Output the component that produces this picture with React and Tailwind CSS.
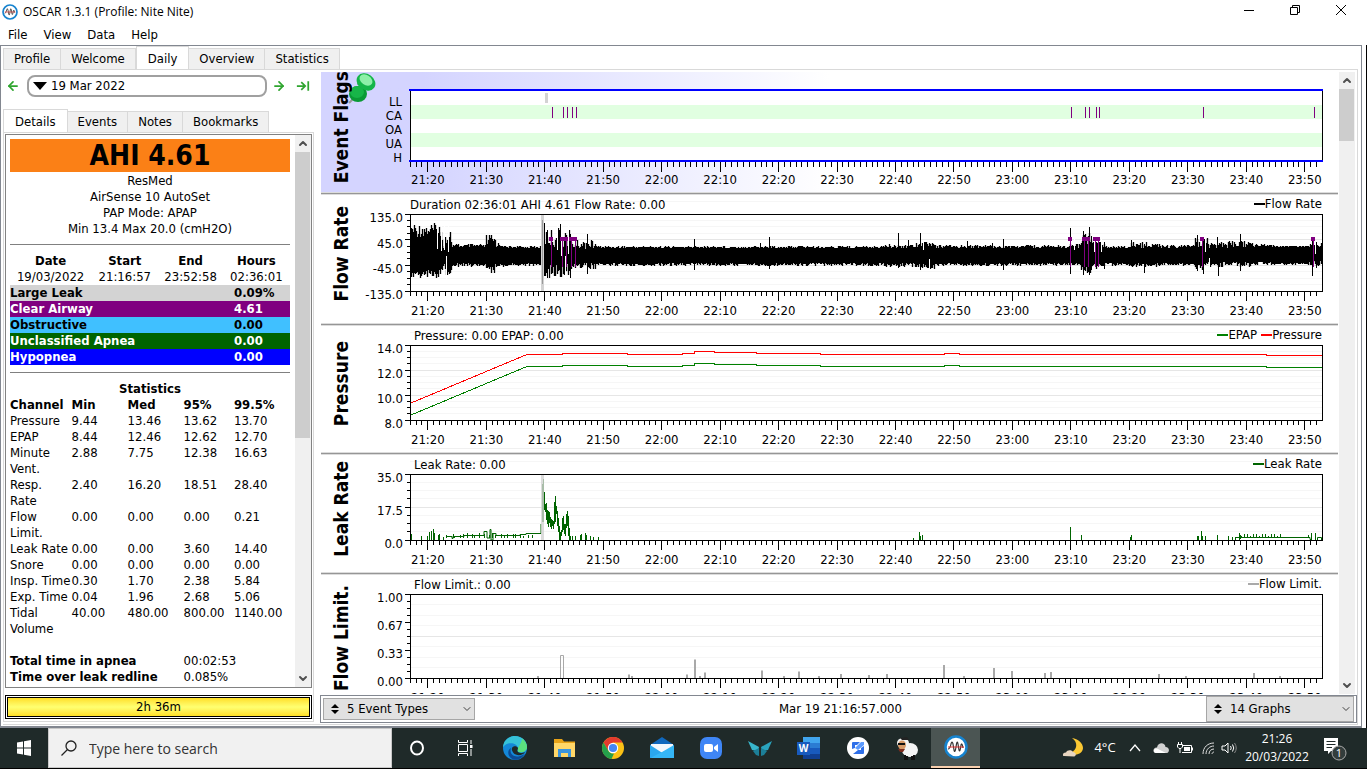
import { ArrowLeft, ArrowRight, ChevronDown, ChevronUp } from "lucide-react";

const mainTabs = ["Profile", "Welcome", "Daily", "Overview", "Statistics"];
const detailTabs = ["Details", "Events", "Notes", "Bookmarks"];

const eventTotals = [
  { name: "Large Leak", value: "0.09%", className: "bg-[#d3d3d3] text-black" },
  { name: "Clear Airway", value: "4.61", className: "bg-[#800080] text-white" },
  { name: "Obstructive", value: "0.00", className: "bg-[#40c0ff] text-black" },
  { name: "Unclassified Apnea", value: "0.00", className: "bg-[#006400] text-white" },
  { name: "Hypopnea", value: "0.00", className: "bg-[#0000ff] text-white" },
];

const statistics = [
  ["Pressure", "9.44", "13.46", "13.62", "13.70"],
  ["EPAP", "8.44", "12.46", "12.62", "12.70"],
  ["Minute\nVent.", "2.88", "7.75", "12.38", "16.63"],
  ["Resp.\nRate", "2.40", "16.20", "18.51", "28.40"],
  ["Flow\nLimit.", "0.00", "0.00", "0.00", "0.21"],
  ["Leak Rate", "0.00", "0.00", "3.60", "14.40"],
  ["Snore", "0.00", "0.00", "0.00", "0.00"],
  ["Insp. Time", "0.30", "1.70", "2.38", "5.84"],
  ["Exp. Time", "0.04", "1.96", "2.68", "5.06"],
  ["Tidal\nVolume", "40.00", "480.00", "800.00", "1140.00"],
];

// The session starts at 21:16:57 and lasts 156 minutes. Traces are drawn in a
// 912 unit wide space that stretches with the plot.
const SESSION_MINUTES = 156;
const FIRST_MINUTE = 17;
const TRACE_WIDTH = 912;

const minuteTicks = Array.from({ length: 156 }, (_, i) => {
  const minute = FIRST_MINUTE + i;
  return {
    x: `${((i + 0.05) / SESSION_MINUTES) * 100}%`,
    major: minute % 10 === 0,
    label: `${21 + Math.floor(minute / 60)}:${String(minute % 60).padStart(2, "0")}`,
  };
});

const clearAirways = [142, 153, 157, 162, 166, 661, 675, 679, 686, 689, 793, 904];

function noise(n) {
  const value = Math.sin(n * 12.9898) * 43758.5453;
  return value - Math.floor(value);
}

// [end x, top, top jitter, bottom, bottom jitter]
const flowSegments = [
  [30, 9, 14, 55, 10],
  [42, 14, 20, 50, 11],
  [76, 30, 4, 49, 4],
  [86, 20, 14, 50, 9],
  [94, 28, 5, 50, 4],
  [132, 32, 2, 49, 3],
  [161, 14, 20, 50, 14],
  [186, 26, 9, 49, 6],
  [470, 32, 2, 49, 3],
  [505, 30, 4, 49, 4],
  [525, 27, 6, 50, 5],
  [660, 31, 3, 49, 3],
  [671, 29, 5, 49, 3],
  [681, 16, 14, 52, 9],
  [695, 25, 8, 49, 6],
  [720, 32, 2, 49, 3],
  [750, 28, 6, 49, 4],
  [785, 31, 3, 49, 3],
  [798, 24, 9, 49, 7],
  [843, 27, 7, 48, 5],
  [864, 30, 3, 48, 3],
  [899, 32, 1, 49, 2],
  [912, 29, 5, 47, 5],
];

const flowSpikes = [
  [134, 9, 60], [137, 16, 64], [150, 10, 56], [160, 20, 64], [177, 20, 60],
  [284, 25, 56], [350, 29, 50], [359, 23, 55], [488, 19, 54], [498, 26, 50],
  [510, 19, 56], [557, 27, 50], [582, 29, 50], [593, 25, 56], [660, 14, 60],
  [673, 17, 61], [679, 13, 61], [681, 22, 56], [694, 28, 55], [721, 26, 51],
  [734, 30, 59], [787, 21, 57], [793, 25, 60], [807, 23, 50], [808, 31, 62],
  [830, 20, 57], [902, 26, 62], [906, 28, 54],
];

const flowPath = Array.from({ length: TRACE_WIDTH }, (_, x) => {
  const [, top, topJitter, bottom, bottomJitter] = flowSegments.find(([end]) => x < end);
  const up = top + Math.round(noise(x + 3) * topJitter);
  const down = bottom + Math.round(noise(x * 3 + 11) * bottomJitter);
  return `M${x + 0.5} ${up}V${down}`;
}).join("");

const flowSpikePath = flowSpikes.map(([x, top, bottom]) => `M${x + 0.5} ${top}V${bottom}`).join("");

// [x, from, to] slits where single breaths stay visible
const flowGaps = [
  [27, 10, 35], [31, 10, 37], [34, 10, 36], [36, 42, 66], [38, 10, 38], [133, 10, 50],
  [147, 10, 36], [151, 10, 42], [155, 42, 66], [158, 10, 40], [513, 26, 36],
  [519, 45, 56], [664, 25, 36], [684, 24, 38], [691, 24, 38], [795, 24, 38],
  [799, 44, 56], [905, 26, 40],
];

const leakNoise = Array.from({ length: 22 }, (_, i) => {
  const x = 36 + Math.round(i * 4 + noise(i) * 3);
  return `M${x + 0.5} 64V${62 - Math.round(noise(i + 5) * 3)}`;
}).join("");

const leakTail = Array.from({ length: 14 }, (_, i) => `M${831.5 + i * 3} 63V${i % 3 === 0 ? 62 : 60}`).join("");

const graphs = [
  {
    title: "Flow Rate",
    height: 128,
    top: 19,
    plot: 77,
    summary: "Duration 02:36:01 AHI 4.61 Flow Rate: 0.00",
    summaryX: 0,
    scale: ["135.0", "45.0", "-45.0", "-135.0"],
    majors: 3,
    legend: [{ name: "Flow Rate", className: "bg-black" }],
    Trace: FlowRateTrace,
  },
  {
    title: "Pressure",
    height: 126,
    top: 19,
    plot: 75,
    summary: "Pressure: 0.00 EPAP: 0.00",
    summaryX: 4,
    scale: ["14.0", "12.0", "10.0", "8.0"],
    majors: 3,
    legend: [
      { name: "EPAP", className: "bg-[#008000]" },
      { name: "Pressure", className: "bg-[#ff0000]" },
    ],
    Trace: PressureTrace,
  },
  {
    title: "Leak Rate",
    height: 117,
    top: 19,
    plot: 66,
    summary: "Leak Rate: 0.00",
    summaryX: 4,
    scale: ["35.0", "17.5", "0.0"],
    majors: 2,
    legend: [{ name: "Leak Rate", className: "bg-[#006400]" }],
    Trace: LeakRateTrace,
  },
  {
    title: "Flow Limit.",
    height: 136,
    top: 19,
    plot: 84,
    summary: "Flow Limit.: 0.00",
    summaryX: 4,
    scale: ["1.00", "0.67", "0.33", "0.00"],
    majors: 2,
    legend: [{ name: "Flow Limit.", className: "bg-[#a9a9a9]" }],
    Trace: FlowLimitTrace,
  },
];

function FlowRateTrace() {
  return (
    <>
      <path d={flowPath} stroke="#000" strokeWidth="1.3" />
      <path d={flowSpikePath} stroke="#000" />
      <path d={flowGaps.map(([x, from, to]) => `M${x + 0.5} ${from}V${to}`).join("")} stroke="#fff" />
      <rect x="131" y="0" width="3" height="77" fill="#d3d3d3" />
      <path d="M132.500 6V70" stroke="#999" />
      {clearAirways.map((x) => (
        <g key={x}>
          <rect x={x - 3} y="23" width="4" height="4" fill="#800080" />
          <path d={`M${x - 0.5} 26V53`} stroke="#800080" />
        </g>
      ))}
    </>
  );
}

function PressureTrace() {
  return (
    <g shapeRendering="crispEdges">
      <path
        d="M1 58L118 9H152V8H217V9H272V8H284V6H304V7H346V8H410V9H534V8H549V9H856V10H912"
        stroke="#ff0000"
      />
      <path
        d="M1 70L118 21H152V20H217V21H272V20H284V18H304V19H346V20H410V21H534V20H549V21H856V22H912"
        stroke="#008000"
      />
    </g>
  );
}

function LeakRateTrace() {
  return (
    <>
      <g stroke="#006400" fill="none">
        <path d="M0.500 66V59M1.500 66V60M11.500 66V62M17.500 66V62M19.500 66V58M21.500 66V57M23.500 66V55M24.500 66V59M28.500 66V61M29.500 66V60M33.500 66V63" />
        <path d="M36 62.500H42V64.500H43V62.500H54V61.500H74V57.500H77V64H80V55.500H81V66H83V59.500H86V61.500H110V60.500H116V59.500H131V50" />
        <path d={leakNoise} />
        <path d="M132.500 48V10M133.500 48V5M134.500 36V18M135.500 38V30M136.500 46V29M137.500 50V36M138.500 53V37M139.500 49V38M140.500 53V43M141.500 55V45M142.500 52V46M143.500 55V47M144.500 50V28M145.500 48V22M146.500 40V32M147.500 52V37M148.500 58V44M149.500 66V52M150.500 66V58M151.500 62V56M152.500 58V44M153.500 56V42M154.500 60V50M155.500 62V50M156.500 54V40M157.500 52V37M158.500 62V42M159.500 66V54M160.500 66V62" />
        <path d="M162.500 66V62M165.500 66V62M170.500 66V61M171.500 66V60M175.500 66V59M176.500 66V61M180.500 66V62M183.500 66V63M188.500 66V63" />
        <path d="M503.500 66V64M509.500 66V58M510.500 66V62M512.500 66V61M660.500 66V53M671.500 66V61M720.500 66V63M721.500 66V61M787.500 66V62M788.500 66V62M791.500 66V57M792.500 66V62M795.500 66V62M807.500 66V61M818.500 66V62M822.500 66V63M825.500 66V63" />
        <path d="M826 63.500H900V65.500H902M907.500 66V63.500H911.500V66" />
        <path d="M829.500 66V59M830.500 65V61M898.500 64V61M901.500 66V59M905.500 66V59" />
        <path d={leakTail} />
      </g>
      <rect x="131" y="0" width="3" height="66" fill="#d3d3d3" fillOpacity="0.8" />
    </>
  );
}

function FlowLimitTrace() {
  return (
    <>
      <path d="M150.500 84V61.500H153.500V84" stroke="#a9a9a9" />
      <path
        d="M128 84V82M219 84V80.500M222 84V82M277 84V80.500M285 84V65.500M290 84V82M295 84V78.500M352 84V76.500M374 84V82M389 84V77.500M409 84V82M431 84V80M459 84V81M477 84V80M534 84V71M554 84V82M584 84V74M602 84V77M635 84V79M641 84V78M749 84V80M776 84V82M844 84V79M870 84V82"
        stroke="#a9a9a9"
        strokeWidth="2"
      />
    </>
  );
}

function TimeAxis({ y, labelGap = 24 }) {
  return (
    <g>
      {minuteTicks.map((tick) => (
        <line
          key={tick.label}
          x1={tick.x}
          x2={tick.x}
          y1={y}
          y2={y + (tick.major ? 10 : 5)}
          stroke="#000"
          shapeRendering="crispEdges"
        />
      ))}
      {minuteTicks
        .filter((tick) => tick.major)
        .map((tick) => (
          <text key={tick.label} x={tick.x} y={y + labelGap} textAnchor="middle">
            {tick.label}
          </text>
        ))}
    </g>
  );
}

function GraphTitle({ children }) {
  return (
    <div className="flex w-10 shrink-0 items-center justify-center pb-2.5">
      <h2 className="rotate-180 text-[19px] leading-5 font-bold whitespace-nowrap [writing-mode:vertical-rl]">
        {children}
      </h2>
    </div>
  );
}

function GraphDivider() {
  return <div className="h-[3px] shrink-0 border-y border-[#dcdcdc] bg-[#969696]" />;
}

function EventFlags() {
  return (
    <section className="relative flex h-[120px] shrink-0 bg-linear-to-r from-[#d4d4ff] from-10% to-white to-50% pr-4">
      <svg className="absolute top-0 left-6 h-8 w-8" viewBox="0 0 32 32" aria-hidden="true">
        <path d="M8 27L4 31" stroke="#999" strokeWidth="2" />
        <ellipse cx="13" cy="22" rx="9" ry="8" fill="#0a9a35" />
        <ellipse cx="12" cy="20" rx="7" ry="6" fill="#17b548" />
        <path d="M12 12L20 19L24 12L17 6Z" fill="#0c8f30" />
        <ellipse cx="21" cy="10" rx="10" ry="8" transform="rotate(35 21 10)" fill="#14b548" />
        <ellipse cx="21" cy="8" rx="7" ry="5" transform="rotate(35 21 8)" fill="#8df0a8" />
      </svg>
      <GraphTitle>Event Flags</GraphTitle>
      <svg className="ml-[49px] h-full min-w-0 flex-1 overflow-visible text-[13px]">
        <rect x="0" y="18" width="100%" height="71" fill="#fff" />
        <rect x="1" y="33" width="100%" height="14" fill="#e1ffe1" />
        <rect x="1" y="61" width="100%" height="14" fill="#e1ffe1" />
        {["LL", "CA", "OA", "UA", "H"].map((name, i) => (
          <text key={name} x="-8" y={34 + i * 14} textAnchor="end">
            {name}
          </text>
        ))}
        <svg width="100%" height="120" viewBox="0 0 912 120" preserveAspectRatio="none">
          <rect x="135" y="21" width="3" height="10" fill="#d3d3d3" />
          {clearAirways.map((x) => (
            <path key={x} d={`M${x + 0.5} 35V46`} stroke="#800080" />
          ))}
        </svg>
        <g shapeRendering="crispEdges">
          <line x1="0" x2="0" y1="18" y2="90" stroke="#000" />
          <line x1="100%" x2="100%" y1="18" y2="90" stroke="#000" />
          <line x1="0" x2="100%" y1="18" y2="18" stroke="#0000ff" strokeWidth="2" strokeLinecap="square" />
          <line x1="0" x2="100%" y1="89" y2="89" stroke="#0000ff" strokeWidth="2" strokeLinecap="square" />
        </g>
        <TimeAxis y={90} labelGap={22} />
      </svg>
    </section>
  );
}

function Graph({ graph }) {
  const { title, height, top, plot, summary, summaryX, scale, majors, legend, Trace } = graph;
  const tickCount = (scale.length - 1) * 4;
  const gridCount = majors * 4;

  return (
    <section className="flex shrink-0 pr-4" style={{ height }}>
      <GraphTitle>{title}</GraphTitle>
      <div className="relative ml-[49px] min-w-0 flex-1">
        <svg className="h-full w-full overflow-visible text-[13px]">
          <g shapeRendering="crispEdges">
            {Array.from({ length: gridCount + 1 }, (_, i) => (
              <line
                key={i}
                x1="0"
                x2="100%"
                y1={top + (plot * i) / gridCount}
                y2={top + (plot * i) / gridCount}
                stroke={i % 4 === 0 ? "#e6e6e6" : "#f6f6f6"}
              />
            ))}
            <line x1="0" x2="100%" y1="6" y2="6" stroke="#f6f6f6" />
            <line x1="0" x2="100%" y1={height - 4} y2={height - 4} stroke="#f0f0f0" />
          </g>
          <svg y={top} width="100%" height={plot} viewBox={`0 0 912 ${plot}`} preserveAspectRatio="none" fill="none">
            <Trace />
          </svg>
          <g shapeRendering="crispEdges">
            <rect x="0" y={top} width="100%" height={plot} fill="none" stroke="#000" />
            {Array.from({ length: tickCount + 1 }, (_, i) => (
              <line
                key={i}
                x1={i % 4 === 0 ? -5 : -3}
                x2="0"
                y1={top + (plot * i) / tickCount}
                y2={top + (plot * i) / tickCount}
                stroke="#000"
              />
            ))}
          </g>
          {scale.map((label, i) => (
            <text key={label} x="-7" y={top + 8 + (plot * i) / (scale.length - 1)} textAnchor="end">
              {label}
            </text>
          ))}
          <text x={summaryX} y={top - 5}>
            {summary}
          </text>
          <TimeAxis y={top + plot} />
        </svg>
        <ul className="absolute top-px right-0 flex gap-1 text-[13px] leading-4">
          {legend.map((item) => (
            <li key={item.name} className="flex items-center">
              <span className={`h-0.5 w-[11px] ${item.className}`} />
              {item.name}
            </li>
          ))}
        </ul>
      </div>
    </section>
  );
}

function ScrollBar({ thumbClass }) {
  return (
    <div className="flex w-4 shrink-0 flex-col items-center bg-[#f0f0f0] text-[#505050]">
      <ChevronUp className="h-[17px] w-3 shrink-0" strokeWidth={4} />
      <div className="w-full min-h-0 flex-1 pr-px">
        <div className={`bg-[#cdcdcd] ${thumbClass}`} />
      </div>
      <ChevronDown className="h-[17px] w-3 shrink-0" strokeWidth={4} />
    </div>
  );
}

function OscarMark() {
  return (
    <>
      <circle cx="12" cy="12" r="10.500" fill="#fff" stroke="#1683cf" strokeWidth="2.500" />
      <path
        d="M4 14Q6 14 7 9Q8 5 9 9L10 15Q11 19 12 12Q13 4 14 9L15 15Q16 18 17 10Q18 7 19 13"
        stroke="#333"
        strokeWidth="1.200"
      />
      <path d="M4 12H20" stroke="#e03030" />
    </>
  );
}

function TitleBar() {
  return (
    <header className="flex h-6 shrink-0 items-center bg-white pl-0.5">
      <svg className="h-4 w-4" viewBox="0 0 24 24" fill="none" aria-hidden="true">
        <OscarMark />
      </svg>
      <h1 className="ml-[5px] font-['Open_Sans',sans-serif] text-[12px]">OSCAR 1.3.1 (Profile: Nite Nite)</h1>
      <div className="mr-[3px] ml-auto flex pb-1">
        <button className="flex h-5 w-[46px] items-center justify-center" aria-label="Minimize">
          <svg className="h-3 w-3" viewBox="0 0 12 12" stroke="#000"><path d="M1 6.500H11" /></svg>
        </button>
        <button className="flex h-5 w-[46px] items-center justify-center" aria-label="Restore">
          <svg className="h-3 w-3" viewBox="0 0 12 12" fill="none" stroke="#000">
            <path d="M1.500 3.500H8.500V10.500H1.500ZM3.500 3.500V1.500H10.500V8.500H8.500" />
          </svg>
        </button>
        <button className="flex h-5 w-[46px] items-center justify-center" aria-label="Close">
          <svg className="h-3 w-3" viewBox="0 0 12 12" stroke="#000"><path d="M1 1L11 11M11 1L1 11" /></svg>
        </button>
      </div>
    </header>
  );
}

function TabBar({ tabs, active, className = "" }) {
  return (
    <div role="tablist" className={`flex items-end ${className}`}>
      {tabs.map((tab) => (
        <button
          key={tab}
          role="tab"
          aria-selected={tab === active}
          className={
            tab === active
              ? "-mb-px h-6 border border-b-0 border-[#d9d9d9] bg-white px-[11px]"
              : "h-[21px] border border-b-0 border-l-0 border-[#d9d9d9] bg-[#f0f0f0] px-[10px] first:border-l"
          }
        >
          {tab}
        </button>
      ))}
    </div>
  );
}

function GreenArrow({ label, children }) {
  return (
    <button className="flex w-4 items-center justify-center text-[#2fa52f]" aria-label={label}>
      {children}
    </button>
  );
}

function Details() {
  return (
    <div className="min-w-0 flex-1 overflow-hidden pt-1 pr-[5px] pl-1 leading-4">
      <p className="h-[33px] bg-[#fb8016] text-center text-[28px] leading-[34px] font-bold">AHI 4.61</p>
      <div className="pt-px text-center">
        <p>ResMed</p>
        <p>AirSense 10 AutoSet</p>
        <p>PAP Mode: APAP</p>
        <p>Min 13.4 Max 20.0 (cmH2O)</p>
      </div>
      <hr className="mt-[7px] border-[#808080]" />
      <table className="mt-2 w-full table-fixed text-center">
        <thead>
          <tr>
            <th className="w-[29%]">Date</th>
            <th className="w-[24%]">Start</th>
            <th className="w-[23%]">End</th>
            <th className="w-[24%]">Hours</th>
          </tr>
        </thead>
        <tbody>
          <tr>
            <td>19/03/2022</td>
            <td>21:16:57</td>
            <td>23:52:58</td>
            <td>02:36:01</td>
          </tr>
        </tbody>
      </table>
      <table className="w-full table-fixed text-left">
        <tbody>
          {eventTotals.map((event) => (
            <tr key={event.name} className={event.className}>
              <th className="w-[80%]">{event.name}</th>
              <td className="font-bold">{event.value}</td>
            </tr>
          ))}
        </tbody>
      </table>
      <hr className="mt-[7px] border-[#808080]" />
      <table className="mt-2 w-full table-fixed text-left whitespace-pre">
        <caption className="font-bold">Statistics</caption>
        <thead>
          <tr>
            <th className="w-[22%]">Channel</th>
            <th className="w-[20%]">Min</th>
            <th className="w-[20%]">Med</th>
            <th className="w-[18%]">95%</th>
            <th className="w-[20%]">99.5%</th>
          </tr>
        </thead>
        <tbody>
          {statistics.map(([channel, ...values]) => (
            <tr key={channel} className="align-top">
              <td>{channel}</td>
              {values.map((value, i) => (
                <td key={i}>{value}</td>
              ))}
            </tr>
          ))}
          <tr className="h-8 align-bottom">
            <th colSpan="3">Total time in apnea</th>
            <td colSpan="2">00:02:53</td>
          </tr>
          <tr>
            <th colSpan="3">Time over leak redline</th>
            <td colSpan="2">0.085%</td>
          </tr>
        </tbody>
      </table>
    </div>
  );
}

function Sidebar() {
  return (
    <aside className="flex w-[317px] shrink-0 flex-col pb-px">
      <div className="mt-[5px] flex h-[22px] shrink-0 items-center gap-1 pl-0.5">
        <GreenArrow label="Previous day">
          <ArrowLeft className="h-3.5 w-3.5" strokeWidth={3} />
        </GreenArrow>
        <button className="ml-0.5 flex h-[22px] flex-1 items-center gap-1 rounded-lg border-2 border-[#a0a0a0] bg-white pl-1 text-left">
          <svg className="h-2 w-3.5" viewBox="0 0 14 8" aria-hidden="true"><path d="M0 0H14L7 8Z" /></svg>
          19 Mar 2022
        </button>
        <div className="flex gap-2 pr-[9px]">
          <GreenArrow label="Next day">
            <ArrowRight className="h-3.5 w-3.5" strokeWidth={3} />
          </GreenArrow>
          <GreenArrow label="Latest day">
            <svg className="h-3.5 w-3.5" viewBox="0 0 16 14" fill="none" stroke="currentColor" strokeWidth="2">
              <path d="M1 7H10M6 2.500L10.500 7L6 11.500M14 1.500V12.500" />
            </svg>
          </GreenArrow>
        </div>
      </div>
      <TabBar tabs={detailTabs} active="Details" className="mt-3" />
      <div className="mr-1.5 flex min-h-0 flex-1 flex-col border border-[#d9d9d9] p-px pb-0.5">
        <div className="flex min-h-0 flex-1 border border-[#828282]">
          <Details />
          <ScrollBar thumbClass="h-[286px]" />
        </div>
        <div className="mt-[7px] shrink-0 border border-black p-px">
          <div className="h-5 border border-black bg-linear-to-b from-[#ffdf1e] via-[#ffff70] to-[#ffe01e] text-center leading-[18px]">
            2h 36m
          </div>
        </div>
      </div>
    </aside>
  );
}

function ToolSelect({ label, value, className }) {
  return (
    <label className={`relative flex items-center ${className}`}>
      <span className="sr-only">{label}</span>
      <svg className="pointer-events-none absolute left-2 h-2.5 w-2" viewBox="0 0 8 10" aria-hidden="true">
        <path d="M4 0L8 4H0ZM4 10L8 6H0Z" />
      </svg>
      <select className="h-full w-full appearance-none border border-[#a6a6a6] bg-[#e1e1e1] pl-[23px]" defaultValue={value}>
        <option>{value}</option>
      </select>
      <ChevronDown className="pointer-events-none absolute right-0.5 h-3 w-3 text-[#404040]" />
    </label>
  );
}

function GraphPanel() {
  return (
    <main className="flex min-w-0 flex-1 flex-col">
      <div className="mr-0.5 ml-px flex min-h-0 flex-1 pt-0.5">
        <div className="mr-px min-h-0 min-w-0 flex-1 overflow-hidden">
          <EventFlags />
          {graphs.map((graph) => (
            <div key={graph.title}>
              <GraphDivider />
              <Graph graph={graph} />
            </div>
          ))}
        </div>
        <ScrollBar thumbClass="h-[52px]" />
      </div>
      <div className="mt-px flex h-7 shrink-0 items-center justify-between border border-[#828790] px-0.5">
        <ToolSelect label="Event types" value="5 Event Types" className="h-[22px] w-[152px]" />
        <p>Mar 19 21:16:57.000</p>
        <ToolSelect label="Graphs" value="14 Graphs" className="h-[26px] w-[148px]" />
      </div>
    </main>
  );
}

function TaskIcon({ label, active = false, children }) {
  return (
    <button
      aria-label={label}
      className={
        active
          ? "flex h-full w-[49px] items-center justify-center border-b-2 border-[#f8cfae] bg-[#4b5553]"
          : "flex h-full w-[49px] items-center justify-center"
      }
    >
      <svg className="h-6 w-6" viewBox="0 0 24 24" fill="none">
        {children}
      </svg>
    </button>
  );
}

function Taskbar() {
  return (
    <footer className="flex h-[41px] shrink-0 items-center border-b border-black bg-[#1f2a29] font-['Open_Sans',sans-serif] text-white">
      <button className="flex w-12 shrink-0 justify-center" aria-label="Start">
        <svg className="h-4 w-4" viewBox="0 0 16 16" fill="#fff">
          <path d="M1 2.500L7 1.500V7.500H1ZM8 1.300L15 0V7.500H8ZM1 8.500H7V14.500L1 13.500ZM8 8.500H15V16L8 14.700Z" />
        </svg>
      </button>
      <label className="flex h-full w-[344px] items-center gap-3 border border-[#c8c8c8] bg-[#f1f1f1] pl-3">
        <span className="sr-only">Search</span>
        <svg className="h-4 w-4 shrink-0" viewBox="0 0 16 16" fill="none" stroke="#222" strokeWidth="1.300">
          <circle cx="10" cy="6" r="5" />
          <path d="M6.500 9.500L0.500 15.500" />
        </svg>
        <input className="w-full text-[14px] outline-none placeholder:text-[#333]" placeholder="Type here to search" />
      </label>
      <nav className="flex h-full items-center">
        <TaskIcon label="Cortana">
          <ellipse cx="12" cy="12" rx="6" ry="6.500" stroke="#fff" strokeWidth="2" />
        </TaskIcon>
        <TaskIcon label="Task view">
          <path d="M4.500 4V6.500H13.500V4M4.500 20V17.500H13.500V20M4.500 8.500H13.500V15.500H4.500ZM17 4V8M17 13V20" stroke="#fff" />
          <path d="M16 9H18.500V12H16Z" fill="#fff" />
        </TaskIcon>
        <TaskIcon label="Edge">
          <circle cx="12" cy="12" r="12" fill="#1488d8" />
          <path d="M0 11C1 3 7 0 12 0C19 0 24 5 24 11C24 15 20 17 16 16C14 15.500 15 14 15 12C14 7 5 5 0 11Z" fill="#36c2d8" />
          <path d="M19 2.500C22 4.500 24 8 24 11C24 15 20 17 16 16C14 15 15 14 15 12C16 10 19 6 19 2.500Z" fill="#5be07e" />
          <path d="M8 12C6 18 11 22 17 20C19 19.500 21 18.500 22 17.500C19 23 14 24.500 10 23.500C3 20 5 13 8 12Z" fill="#0c4b94" />
          <path d="M9 12C10 9.500 14 9.500 15 12C15 13.500 13.500 14.500 15 16C17 17.500 20 17 22 16C20 20 13 20 10.500 17C9 15 8.500 13.500 9 12Z" fill="#1f2a29" />
        </TaskIcon>
        <TaskIcon label="File Explorer">
          <path d="M2 3H10L12 5.500H23V21H2Z" fill="#e8a317" />
          <path d="M2 7H23V21H2Z" fill="#ffd768" />
          <path d="M6 13H19V21H16V17H9V21H6Z" fill="#3a94dd" />
        </TaskIcon>
        <TaskIcon label="Chrome">
          <circle cx="12" cy="12" r="11" fill="#fbc116" />
          <path d="M12 1C16 1 19.800 3 21.600 6.500H12L7.200 14.800L2.500 6.500C4.500 3 8 1 12 1Z" fill="#e33b2e" />
          <path d="M2.500 6.500L7.300 14.700C8.500 17 11 17.800 13 17.400L10.500 23C4.500 22 1 17.500 1 12C1 10 1.500 8 2.500 6.500Z" fill="#25a04b" />
          <circle cx="12" cy="12" r="5.200" fill="#fff" />
          <circle cx="12" cy="12" r="4.100" fill="#4386f5" />
        </TaskIcon>
        <TaskIcon label="Mail">
          <path d="M0 9L12 1L24 9V22H0Z" fill="#1068bd" />
          <path d="M1 8H23V18H1Z" fill="#f2f7fc" />
          <path d="M0 9L14 18L0 22Z" fill="#2aa7ee" />
          <path d="M24 9V22H0L12 16Z" fill="#35b6f6" />
        </TaskIcon>
        <TaskIcon label="Zoom">
          <rect x="1" y="1" width="22" height="22" rx="7" fill="#3f86f6" />
          <rect x="5" y="8" width="9" height="8" rx="2" fill="#fff" />
          <path d="M15 11L19 8V16L15 13Z" fill="#fff" />
        </TaskIcon>
        <TaskIcon label="Butterfly">
          <path d="M0 5L11 11L10 15L4 14Z" fill="#38b6cc" />
          <path d="M24 5L13 11L14 15L20 14Z" fill="#2aa3bd" />
          <path d="M5 15L11 12V20L8 19ZM19 15L13 12V20L16 19Z" fill="#1c7f98" />
        </TaskIcon>
        <TaskIcon label="Word">
          <path d="M6 1H23V7H6Z" fill="#41a5ee" />
          <path d="M6 7H23V12H6Z" fill="#2b7cd3" />
          <path d="M6 12H23V18H6Z" fill="#185abd" />
          <path d="M6 18H23V23H6Z" fill="#103f91" />
          <rect x="0" y="6" width="13" height="13" fill="#185abd" />
          <text x="6.500" y="16" textAnchor="middle" fill="#fff" className="text-[10px] font-bold">W</text>
        </TaskIcon>
        <TaskIcon label="Sync">
          <ellipse cx="12" cy="12" rx="11" ry="11" fill="#fff" />
          <path d="M6 13V7Q6 6 7 6H14L11 9H9V12ZM18 10V17Q18 18 17 18H7L12 14H15V12Z" fill="#2e6fe8" />
          <path d="M15 6H18V9L12 14L9 12Z" fill="#5c9bff" />
        </TaskIcon>
        <TaskIcon label="Sheep">
          <ellipse cx="15" cy="14" rx="8" ry="7" fill="#f4f4f4" />
          <path d="M10 19V23H12V20M17 20V23H19V19" stroke="#111" strokeWidth="2" />
          <ellipse cx="8" cy="7" rx="6" ry="5" fill="#f4f4f4" />
          <ellipse cx="7" cy="9" rx="4" ry="4.500" fill="#d69a68" />
          <path d="M3 7H10V9H3Z" fill="#111" />
          <path d="M3 13H10L8 16H5Z" fill="#7a2a1c" />
          <path d="M5 2L12 1L14 4L7 4Z" fill="#222" />
        </TaskIcon>
        <TaskIcon label="OSCAR" active>
          <OscarMark />
        </TaskIcon>
      </nav>
      <div className="ml-auto flex items-center gap-2 pr-[18px]">
        <svg className="-mr-1 h-6 w-6" viewBox="0 0 24 24" aria-hidden="true">
          <path d="M11 2C17 6 17 14 9 17C15 21 22 17 22 12C22 7 17 3 11 2Z" fill="#fbc833" />
          <path d="M3 20C1 20 2 16 5 16.500C6 13.500 11 13.500 12 16C15 16 16 20 13 20.500Z" fill="#e8d5c0" />
        </svg>
        <span className="w-8 text-center text-[13px]">4°C</span>
        <svg className="h-4 w-3" viewBox="0 0 12 16" fill="none" stroke="#fff" strokeWidth="1.300"><path d="M1 11L6 5L11 11" /></svg>
        <svg className="ml-1 h-4 w-4" viewBox="0 0 16 16" aria-hidden="true">
          <path d="M3 13C-1 13 0 7 4 7.500C5 2 12 2 12.500 7C17 7 17 13 13 13Z" fill="#d0d0d0" />
          <path d="M3 13C0 13 0 8 4 8.500L13 13Z" fill="#fff" />
        </svg>
        <svg className="h-4 w-4" viewBox="0 0 16 16" fill="none" stroke="#fff" aria-hidden="true">
          <path d="M6 5.500H14.500V12.500H5M15.500 7.500V10.500M1.500 2V4M4.500 2V4M0.500 4.500H5.500V7L4 8.500H2L0.500 7ZM3 8.500V13" />
          <path d="M7 7H13V11H7Z" fill="#fff" stroke="none" />
        </svg>
        <svg className="h-4 w-4" viewBox="0 0 16 16" fill="none" stroke="#ddd" aria-hidden="true">
          <path d="M2 14C2 7 7 3 13 3M5 14C5 9 9 6 13 6M8 14C8 11 10 9 13 9M11 14C11 13 12 12 13 12" />
        </svg>
        <svg className="-ml-1 h-4 w-4" viewBox="0 0 16 16" fill="none" stroke="#fff" aria-hidden="true">
          <path d="M1 6H4L7 3V13L4 10H1ZM9.500 6Q11 8 9.500 10M11.500 4.500Q14 8 11.500 11.500" />
          <path d="M13.500 3Q17 8 13.500 13" stroke="#888" />
        </svg>
        <div className="w-[64px] text-center text-[12px] leading-[18px]">
          <p>21:26</p>
          <p>20/03/2022</p>
        </div>
        <button className="ml-1 flex" aria-label="Notifications">
          <svg className="h-7 w-7" viewBox="0 0 28 28">
            <path d="M3 4H17V17H10L7 20V17H3Z" fill="#fff" />
            <path d="M5.500 7.500H14.500M5.500 10.500H14.500M5.500 13.500H11" stroke="#1f2a29" />
            <circle cx="18" cy="19" r="7" fill="#333d3c" stroke="#aaa" />
            <text x="18" y="23" textAnchor="middle" fill="#fff" className="text-[11px]">1</text>
          </svg>
        </button>
      </div>
    </footer>
  );
}

export default function App() {
  return (
    <div className="flex h-screen min-h-0 flex-col overflow-hidden bg-white font-['DejaVu_Sans_Condensed','Noto_Sans',sans-serif] text-[13px] text-black">
      <TitleBar />
      <nav className="flex h-[21px] shrink-0 items-center gap-4 pl-2">
        <button>File</button>
        <button>View</button>
        <button>Data</button>
        <button>Help</button>
      </nav>
      <div className="flex min-h-0 flex-1 border-r border-black pr-1">
        <div className="flex min-h-0 min-w-0 flex-1 flex-col border border-b-2 border-[#828790] pr-[3px] pl-0.5">
          <TabBar tabs={mainTabs} active="Daily" />
          <div className="mb-px flex min-h-0 flex-1 border border-l-0 border-[#d9d9d9] pb-px">
            <Sidebar />
            <GraphPanel />
          </div>
        </div>
      </div>
      <Taskbar />
    </div>
  );
}
